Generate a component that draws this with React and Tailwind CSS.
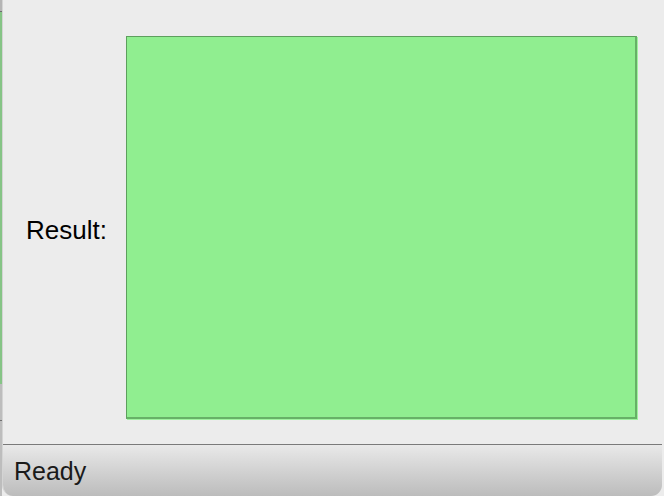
export default function App() {
    return (
        <div className="w-[664px] h-[496px] flex bg-[#ececec] overflow-hidden" style={{ fontFamily: '"Liberation Sans", Arial, sans-serif' }}>
            {/* Window behind, peeking out on the left */}
            <div className="w-[2px] flex flex-col">
                <div className="h-[11px] bg-[#b5b5b5]" />
                <div className="h-[1px] bg-[#6d6d6d]" />
                <div className="h-[372px] bg-[#86c486]" />
                <div className="h-[36px] bg-[#bdbdbd]" />
                <div className="h-[1px] bg-[#707070]" />
                <div className="flex-1 bg-[#bdbdbd]" />
            </div>

            {/* Window */}
            <div className="w-[660px] flex flex-col bg-[#ececec] border-l border-[#d4d4d4] rounded-b-[11px] overflow-hidden">
                <div className="flex-1 flex items-center pl-[23px] pt-[36px] pb-[25px] gap-[16px]">
                    <span className="text-[26px] text-black leading-none w-[84px] mt-[4px]">Result:</span>
                    <div className="w-[511px] h-[383px] bg-[#90ee90] border-l border-t border-r-2 border-b-2 border-l-[#5d9f5d] border-t-[#5d9f5d] border-r-[#67b167] border-b-[#67b167] shadow-[1px_1px_0_#9ff29f]" />
                </div>

                {/* Status bar */}
                <div className="h-[52px] border-t border-[#7a7a7a] bg-gradient-to-b from-[#e9e9e9] to-[#bcbcbc] flex items-center pl-[11px]">
                    <span className="text-[25px] text-[#1a1a1a] leading-none mt-[2px]">Ready</span>
                </div>
            </div>

            <div className="w-[2px] bg-[#ececec]" />
        </div>
    );
}
